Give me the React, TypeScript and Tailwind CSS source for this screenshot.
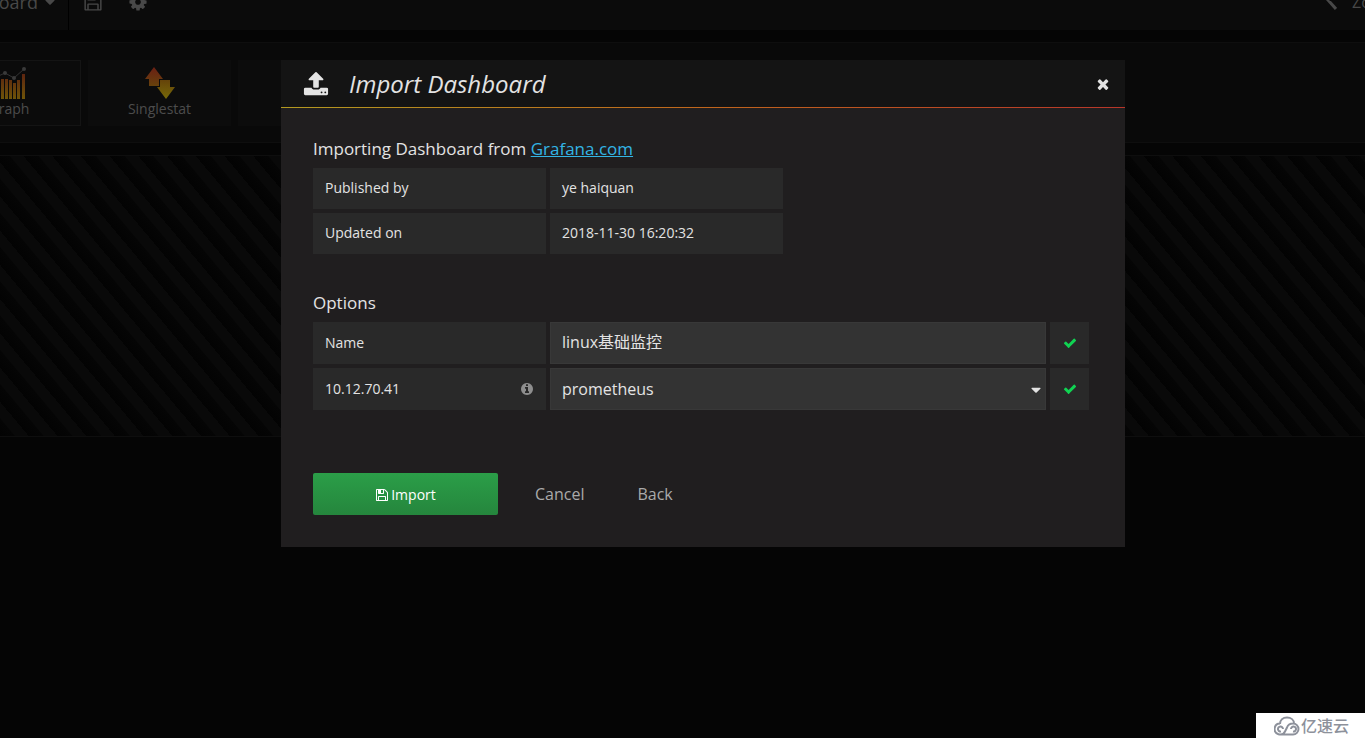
import React from 'react';

type IconProps = { d: string; className?: string };

const Icon: React.FC<IconProps> = ({ d, className }) => (
  <svg viewBox="0 0 1792 1792" fill="currentColor" aria-hidden="true" className={className}>
    <path d={d} />
  </svg>
);

const icons = {
  check: 'M1671 566q0 40-28 68l-724 724-136 136q-28 28-68 28t-68-28l-136-136-362-362q-28-28-28-68t28-68l136-136q28-28 68-28t68 28l294 295 656-657q28-28 68-28t68 28l136 136q28 28 28 68z',
  close: 'M1490 1322q0 40-28 68l-136 136q-28 28-68 28t-68-28l-294-294-294 294q-28 28-68 28t-68-28l-136-136q-28-28-28-68t28-68l294-294-294-294q-28-28-28-68t28-68l136-136q28-28 68-28t68 28l294 294 294-294q28-28 68-28t68 28l136 136q28 28 28 68t-28 68l-294 294 294 294q28 28 28 68z',
  save: 'M512 1536h768v-384h-768v384zm896 0h128v-896q0-14-10-38.500t-20-34.500l-281-281q-10-10-34-20t-39-10v416q0 40-28 68t-68 28h-576q-40 0-68-28t-28-68v-416h-128v1280h128v-416q0-40 28-68t68-28h832q40 0 68 28t28 68v416zm-384-928v-320q0-13-9.500-22.500t-22.500-9.500h-192q-13 0-22.500 9.500t-9.500 22.500v320q0 13 9.500 22.500t22.500 9.500h192q13 0 22.500-9.500t9.500-22.500zm640 32v928q0 40-28 68t-68 28h-1344q-40 0-68-28t-28-68v-1344q0-40 28-68t68-28h928q40 0 88 20t76 48l280 280q28 28 48 76t20 88z',
  upload: 'M1344 1472q0-26-19-45t-45-19-45 19-19 45 19 45 45 19 45-19 19-45zm256 0q0-26-19-45t-45-19-45 19-19 45 19 45 45 19 45-19 19-45zm128-224v320q0 40-28 68t-68 28h-1472q-40 0-68-28t-28-68v-320q0-40 28-68t68-28h427q21 56 70.500 92t110.500 36h256q61 0 110.500-36t70.500-92h427q40 0 68 28t28 68zm-325-648q-17 40-59 40h-256v448q0 26-19 45t-45 19h-256q-26 0-45-19t-19-45v-448h-256q-42 0-59-40-17-39 14-69l448-448q18-19 45-19t45 19l448 448q31 30 14 69z',
  info: 'M1152 1376v-160q0-14-9-23t-23-9h-96v-512q0-14-9-23t-23-9h-320q-14 0-23 9t-9 23v160q0 14 9 23t23 9h96v320h-96q-14 0-23 9t-9 23v160q0 14 9 23t23 9h448q14 0 23-9t9-23zm-128-896v-160q0-14-9-23t-23-9h-192q-14 0-23 9t-9 23v160q0 14 9 23t23 9h192q14 0 23-9t9-23zm640 416q0 209-103 385.500t-279.500 279.500-385.500 103-385.500-103-279.500-279.500-103-385.500 103-385.500 279.500-279.500 385.500-103 385.500 103 279.500 279.500 103 385.500z',
  caret: 'M1408 704q0 26-19 45l-448 448q-19 19-45 19t-45-19l-448-448q-19-19-19-45t19-45 45-19h896q26 0 45 19t19 45z',
  cog: 'M1152 896q0-106-75-181t-181-75-181 75-75 181 75 181 181 75 181-75 75-181zm512-109v222q0 12-8 23t-20 13l-185 28q-19 54-39 91 35 50 107 138 10 12 10 25t-9 23q-27 37-99 108t-94 71q-12 0-26-9l-138-108q-44 23-91 38-16 136-29 186-7 28-36 28h-222q-14 0-24.500-8.500t-11.500-21.500l-28-184q-49-16-90-37l-141 107q-10 9-25 9-14 0-25-11-126-114-165-168-7-10-7-23 0-12 8-23 15-21 51-66.500t54-70.500q-27-50-41-99l-183-27q-13-2-21-12.500t-8-23.500v-222q0-12 8-23t19-13l186-28q14-46 39-92-40-57-107-138-10-12-10-24 0-10 9-23 26-36 98.500-107.500t94.500-71.500q13 0 26 10l138 107q44-23 91-38 16-136 29-186 7-28 36-28h222q14 0 24.500 8.500t11.500 21.500l28 184q49 16 90 37l142-107q9-9 24-9 13 0 25 10 129 119 165 170 7 8 7 22 0 12-8 23-15 21-51 66.500t-54 70.500q26 50 41 98l183 28q13 2 21 12.500t8 23.500z',
};

const details = [
  { label: 'Published by', value: 'ye haiquan' },
  { label: 'Updated on', value: '2018-11-30 16:20:32' },
];

const Navbar: React.FC = () => (
  <nav className="h-[30px] overflow-hidden bg-[#0b0b0b] text-[#484848]">
    <div className="-mt-[26px] flex h-14 items-center">
      <button className="flex h-full w-[69px] shrink-0 items-center justify-end gap-1 overflow-hidden whitespace-nowrap border-r border-black pr-2.5 text-lg">
        New dashboard
        <Icon d={icons.caret} className="h-4 w-4 shrink-0" />
      </button>
      <button aria-label="Save dashboard" className="ml-[14px]">
        <Icon d={icons.save} className="h-5 w-5" />
      </button>
      <button aria-label="Settings" className="ml-[25px]">
        <Icon d={icons.cog} className="h-5 w-5" />
      </button>
      <button aria-label="Back in time" className="ml-auto mr-[15px]">
        <svg viewBox="0 0 12 20" className="h-5 w-3" fill="none" stroke="currentColor" strokeWidth="3">
          <path d="M10 1 3 8l8 9" />
        </svg>
      </button>
      <button className="w-[13px] overflow-hidden whitespace-nowrap text-base">Zoom Out</button>
    </div>
  </nav>
);

const GraphIcon: React.FC = () => (
  <svg viewBox="0 0 34 34" className="h-[34px] w-[34px]" aria-hidden="true">
    <defs>
      <linearGradient id="bars" x1="0" y1="0" x2="0" y2="34" gradientUnits="userSpaceOnUse">
        <stop offset="0.1" stopColor="#5a1c12" />
        <stop offset="1" stopColor="#6f5608" />
      </linearGradient>
    </defs>
    <path
      fill="url(#bars)"
      d="M1 18h3v15H1zM5 16h3v17H5zM9 13h3v20H9zM13 13h3v20h-3zM17 14h3v19h-3zM21 17h3v16h-3zM25 14h3v19h-3zM30 8h3v25h-3z"
    />
    <path d="M2 12 13 7l9 5L32 3" fill="none" stroke="#333" />
    <g fill="#3a3a3a">
      <circle cx="13" cy="7" r="2" />
      <circle cx="22" cy="12" r="2" />
      <circle cx="32" cy="3" r="2" />
    </g>
  </svg>
);

const SinglestatIcon: React.FC = () => (
  <svg viewBox="0 0 34 34" className="h-[34px] w-[34px]" aria-hidden="true">
    <defs>
      <linearGradient id="up" x1="0" y1="0" x2="0" y2="1">
        <stop offset="0" stopColor="#6b1f14" />
        <stop offset="1" stopColor="#67420c" />
      </linearGradient>
      <linearGradient id="down" x1="0" y1="0" x2="0" y2="1">
        <stop offset="0" stopColor="#65430a" />
        <stop offset="1" stopColor="#776a08" />
      </linearGradient>
    </defs>
    <path fill="url(#up)" d="M11 1 20 13h-4v7H6v-7H2z" />
    <path fill="url(#down)" d="M17 14h10v7h5l-9 12-9-12h3z" />
  </svg>
);

const PanelPicker: React.FC = () => (
  <section className="mt-3 flex h-[101px] items-center gap-[7px] overflow-hidden border-y border-[#0e0e0e] bg-[#090909] text-sm text-[#4c4c4c]">
    <button className="-ml-[63px] flex h-[66px] w-[144px] shrink-0 flex-col items-center justify-center border border-[#141414] bg-[#0b0b0b] pb-0.5">
      <GraphIcon />
      <span className="leading-[18px]">Graph</span>
    </button>
    <button className="flex h-[66px] w-[143px] shrink-0 flex-col items-center justify-center bg-[#0c0c0c] pb-0.5">
      <SinglestatIcon />
      <span className="leading-[18px]">Singlestat</span>
    </button>
    <div className="h-[66px] w-[144px] shrink-0 bg-[#0c0c0c]" />
  </section>
);

const Valid: React.FC = () => (
  <span className="flex w-[39px] shrink-0 items-center justify-center bg-[#292929] text-[#10d352]">
    <Icon d={icons.check} className="h-[14px] w-[14px]" />
  </span>
);

const ImportModal: React.FC = () => (
  <div role="dialog" aria-labelledby="modal-title" className="w-full max-w-[844px] bg-[#201e1f] text-[#e3e3e3]">
    {/* the gradient shows through as the header's bottom line */}
    <div className="bg-[linear-gradient(90deg,#b39a20,#c0661c,#b8362a)] pb-px">
      <header className="flex h-[47px] items-center bg-[#141414] px-[22px]">
        <Icon d={icons.upload} className="h-[26px] w-[26px]" />
        <h2 id="modal-title" className="ml-5 text-2xl italic">Import Dashboard</h2>
        <button aria-label="Close" className="ml-auto -mr-2">
          <Icon d={icons.close} className="h-4 w-4" />
        </button>
      </header>
    </div>

    <form className="px-8 pt-[29px] pb-8" onSubmit={(e) => e.preventDefault()}>
      <h3 className="mb-[7px] text-[17px] leading-6">
        Importing Dashboard from <a href="#grafana" className="text-[#33b5e5] underline">Grafana.com</a>
      </h3>
      <dl className="space-y-1 text-sm">
        {details.map((row) => (
          <div key={row.label} className="flex h-[41px] gap-1">
            <dt className="flex w-[233px] items-center bg-[#292929] px-3 pb-0.5">{row.label}</dt>
            <dd className="flex w-[233px] items-center bg-[#292929] px-3 pb-0.5">{row.value}</dd>
          </div>
        ))}
      </dl>

      <h3 className="mt-[37px] mb-[7px] text-[17px] leading-6">Options</h3>
      <div className="space-y-1 pr-1">
        <div className="flex h-[42px] gap-1">
          <label htmlFor="name" className="flex w-[233px] shrink-0 items-center bg-[#292929] px-3 text-sm">Name</label>
          <input id="name" defaultValue="linux基础监控" className="min-w-0 flex-1 border border-[#383838] bg-[#333333] px-[11px] pb-0.5 text-base outline-none" />
          <Valid />
        </div>
        <div className="flex h-[42px] gap-1">
          <label htmlFor="source" className="flex w-[233px] shrink-0 items-center justify-between bg-[#292929] px-3 text-sm">
            10.12.70.41
            <Icon d={icons.info} className="h-[14px] w-[14px] text-[#8e8e8e]" />
          </label>
          <div className="relative min-w-0 flex-1">
            <select id="source" className="h-full w-full appearance-none border border-[#383838] bg-[#333333] px-[11px] text-base outline-none">
              <option>prometheus</option>
            </select>
            <Icon d={icons.caret} className="pointer-events-none absolute top-[14px] right-0.5 h-4 w-4" />
          </div>
          <Valid />
        </div>
      </div>

      <div className="mt-[63px] flex h-[42px] items-center text-base text-[#aaaaaa]">
        <button type="submit" className="flex h-full w-[185px] items-center justify-center gap-0.5 rounded-xs bg-linear-to-b from-[#2b9e48] to-[#25863d] pt-0.5 text-sm text-white">
          <Icon d={icons.save} className="h-[14px] w-[14px]" />
          Import
        </button>
        <button type="button" className="ml-[37px]">Cancel</button>
        <button type="button" className="ml-[53px]">Back</button>
      </div>
    </form>
  </div>
);

const Watermark: React.FC = () => (
  <div className="fixed right-0 bottom-0 flex h-[25px] w-[109px] items-center justify-center gap-px bg-white pl-0.5 text-base font-medium text-[#8d919b]">
    <svg viewBox="0 0 26 20" className="h-5 w-[26px]" fill="none" stroke="currentColor" strokeWidth="2" aria-hidden="true">
      <path d="M6 8C6 4 9 1.500 13 1.500S20 4 20 7.500M6 7.500a5.500 5.500 0 1 0 5 8l2-4c1-3 3-4 6-4a5.500 5.500 0 1 1 0 11H7M9 13a2.500 2.500 0 1 0-2 2.500M17 13a2.500 2.500 0 1 1 2 2.500" />
    </svg>
    亿速云
  </div>
);

export default function App() {
  return (
    <div className="min-h-screen bg-[#050505] font-['Open_Sans','Noto_Sans_CJK_SC',sans-serif]">
      <Navbar />
      <PanelPicker />
      <div className="mt-3 h-[282px] border-y border-[#0e0e0e] bg-[repeating-linear-gradient(50deg,#030303_0,#050505_11px,#090909_12px,#090909_22px)]" />
      <div className="fixed inset-0 flex items-start justify-center overflow-auto pt-[60px] pl-[41px]">
        <ImportModal />
      </div>
      <Watermark />
    </div>
  );
}
